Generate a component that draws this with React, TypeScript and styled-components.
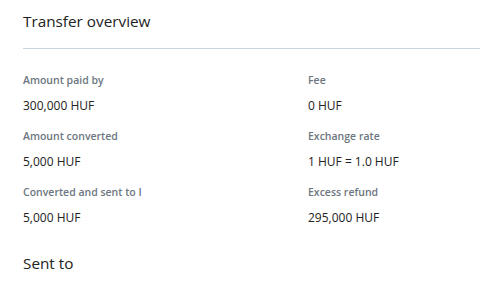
import React from 'react';
import styled, { createGlobalStyle } from 'styled-components';

const GlobalStyle = createGlobalStyle`
  html, body {
    margin: 0;
    padding: 0;
    background: #ffffff;
    overflow: hidden;
  }
  body {
    font-family: 'Open Sans', 'Liberation Sans', sans-serif;
    color: #212529;
  }
`;

const Page = styled.div`
  width: 480px;
  height: 288px;
  overflow: hidden;
  padding: 0 0 0 23px;
  box-sizing: border-box;
`;

const Section = styled.section`
  width: 580px;
`;

const SectionTitle = styled.h2<{ $top: number }>`
  margin: 0;
  padding-top: ${(p) => p.$top}px;
  font-size: 15.3px;
  font-weight: 400;
  line-height: 22px;
  color: #222;
`;

const Divider = styled.hr`
  margin: 16px 0 0;
  border: none;
  border-top: 1px solid #c9d4de;
`;

const Grid = styled.dl`
  margin: 0;
  padding-top: 22px;
  display: grid;
  grid-template-columns: 285px 285px;
  row-gap: 12px;
`;

const Item = styled.div`
  display: flex;
  flex-direction: column;
  gap: 8px;
`;

const Label = styled.dt`
  font-size: 10.5px;
  font-weight: 600;
  line-height: 18px;
  color: #6c7680;
`;

const Value = styled.dd`
  margin: 0;
  font-size: 12px;
  line-height: 18px;
  color: #222;
`;

const items = [
  { label: 'Amount paid by', value: '300,000 HUF' },
  { label: 'Fee', value: '0 HUF' },
  { label: 'Amount converted', value: '5,000 HUF' },
  { label: 'Exchange rate', value: '1 HUF = 1.0 HUF' },
  { label: 'Converted and sent to I', value: '5,000 HUF' },
  { label: 'Excess refund', value: '295,000 HUF' },
];

const App: React.FC = () => {
  return (
    <Page>
      <GlobalStyle />
      <Section>
        <SectionTitle $top={10}>Transfer overview</SectionTitle>
        <Divider />
        <Grid>
          {items.map((it) => (
            <Item key={it.label}>
              <Label>{it.label}</Label>
              <Value>{it.value}</Value>
            </Item>
          ))}
        </Grid>
        <SectionTitle $top={25}>Sent to</SectionTitle>
      </Section>
    </Page>
  );
};

export default App;
